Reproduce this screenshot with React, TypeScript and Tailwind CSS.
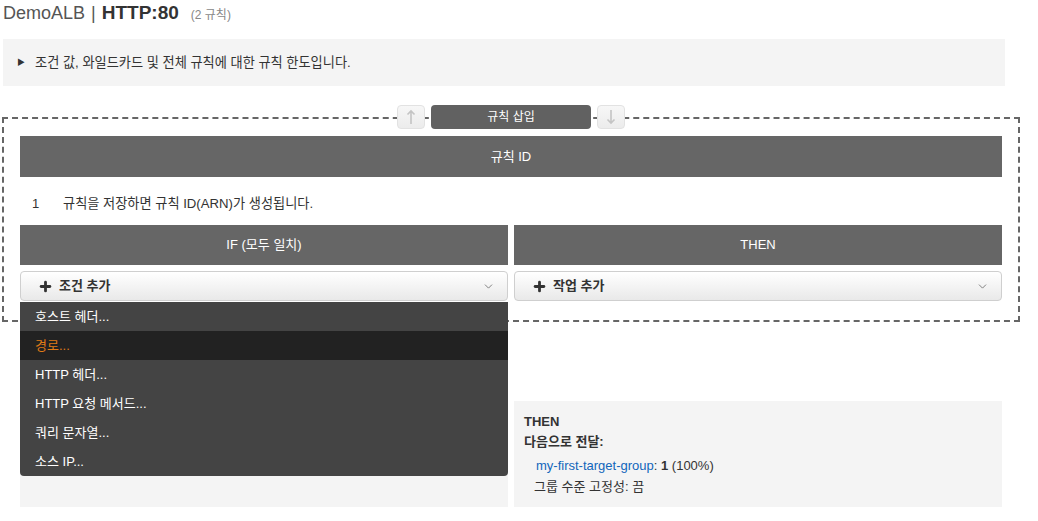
import { Plus, ChevronDown } from 'lucide-react';

const font = { fontFamily: '"Liberation Sans", "Noto Sans CJK KR", sans-serif' };

const menuItems = ['호스트 헤더...', '경로...', 'HTTP 헤더...', 'HTTP 요청 메서드...', '쿼리 문자열...', '소스 IP...'];

function ArrowButton({ dir }: { dir: 'up' | 'down' }) {
  return (
    <div className="w-[28px] h-[24px] rounded-[4px] border border-[#e2e2e2] bg-gradient-to-b from-[#f7f7f7] to-[#ececec] flex items-center justify-center">
      <svg width="10" height="16" viewBox="0 0 10 16" className={dir === 'down' ? 'rotate-180' : ''}>
        <path d="M5 2 V15 M1.5 5.5 L5 2 L8.5 5.5" stroke="#c4c4c4" strokeWidth="1.6" fill="none" />
      </svg>
    </div>
  );
}

function AddButton({ label }: { label: string }) {
  return (
    <div className="h-[30px] rounded-[4px] border border-[#cfcfcf] bg-gradient-to-b from-[#ffffff] to-[#e9e9e9] flex items-center pl-[17px] pr-[12px] text-[13px] text-[#333]">
      <Plus size={15} strokeWidth={4.5} className="text-[#333]" />
      <span className="ml-[6px] font-bold">{label}</span>
      <ChevronDown size={13} strokeWidth={1.5} className="ml-auto text-[#666]" />
    </div>
  );
}

export default function App() {
  return (
    <div className="bg-white w-[1038px] h-[521px] overflow-hidden text-[#333] px-[2px]" style={font}>
      {/* title */}
      <div className="h-[27px] flex items-center pl-px">
        <span className="text-[18px] text-[#555]">DemoALB</span>
        <span className="text-[18px] text-[#555] ml-[6px]">|</span>
        <span className="text-[19px] font-bold text-[#333] ml-[6px]">HTTP:80</span>
        <span className="text-[12px] text-[#888] ml-[12px] mt-[2px]">(2 규칙)</span>
      </div>

      {/* info */}
      <div className="mt-[12px] ml-px w-[1002px] h-[47px] bg-[#f4f4f4] flex items-center pl-[14px] text-[13px] text-[#333]">
        <span className="text-[8px] mr-[10px]">▶</span>
        <span className="text-[13.2px]">조건 값, 와일드카드 및 전체 규칙에 대한 규칙 한도입니다.</span>
      </div>

      {/* rule box */}
      <div className="relative mt-[31px] w-[1018px] border-2 border-dashed border-[#666] pt-[17px] px-[16px] pb-[19px]">
        <div className="absolute -top-[14px] left-0 right-0 flex justify-center gap-[6px]">
          <ArrowButton dir="up" />
          <div className="w-[160px] h-[24px] rounded-[4px] bg-[#616161] text-white text-[12px] flex items-center justify-center">
            규칙 삽입
          </div>
          <ArrowButton dir="down" />
        </div>

        <div className="h-[41px] bg-[#666] text-white text-[13px] flex items-center justify-center">규칙 ID</div>
        <div className="h-[48px] flex items-center pt-[5px] text-[13px] text-[#333]">
          <span className="pl-[12px] w-[43px]">1</span>
          <span className="text-[13.2px]">규칙을 저장하면 규칙 ID(ARN)가 생성됩니다.</span>
        </div>

        <div className="grid grid-cols-2 gap-x-[6px]">
          <div className="h-[40px] bg-[#666] text-white text-[13px] flex items-center justify-center">IF (모두 일치)</div>
          <div className="h-[40px] bg-[#666] text-white text-[13px] flex items-center justify-center">THEN</div>
          <div className="relative mt-[6px]">
            <AddButton label="조건 추가" />
            <div className="absolute z-10 left-0 right-0 top-[31px] bg-[#444] rounded-b-[4px] overflow-hidden">
              {menuItems.map((item, i) => (
                <div
                  key={item}
                  className={
                    i === 1
                      ? 'h-[29px] flex items-center pl-[15px] text-[13px] bg-[#222] text-[#e07b16]'
                      : 'h-[29px] flex items-center pl-[15px] text-[13px] text-white'
                  }
                >
                  {item}
                </div>
              ))}
            </div>
          </div>
          <div className="mt-[6px]">
            <AddButton label="작업 추가" />
          </div>
        </div>
      </div>

      {/* existing rule preview */}
      <div className="mt-[79px] ml-[18px] w-[982px] grid grid-cols-2 gap-x-[6px]">
        <div className="h-[106px] bg-[#f4f4f4]" />
        <div className="h-[106px] bg-[#f4f4f4] pl-[10px] pt-[12px] text-[13px] text-[#333]">
          <div className="font-bold leading-[18px]">THEN</div>
          <div className="font-bold leading-[18px] mt-[2px]">다음으로 전달:</div>
          <div className="leading-[18px] mt-[6px] pl-[12px]">
            <span className="text-[#1166bb]">my-first-target-group</span>: <span className="font-bold">1</span> (100%)
          </div>
          <div className="leading-[18px] mt-[3px] pl-[10px]">그룹 수준 고정성: 끔</div>
        </div>
      </div>
    </div>
  );
}
